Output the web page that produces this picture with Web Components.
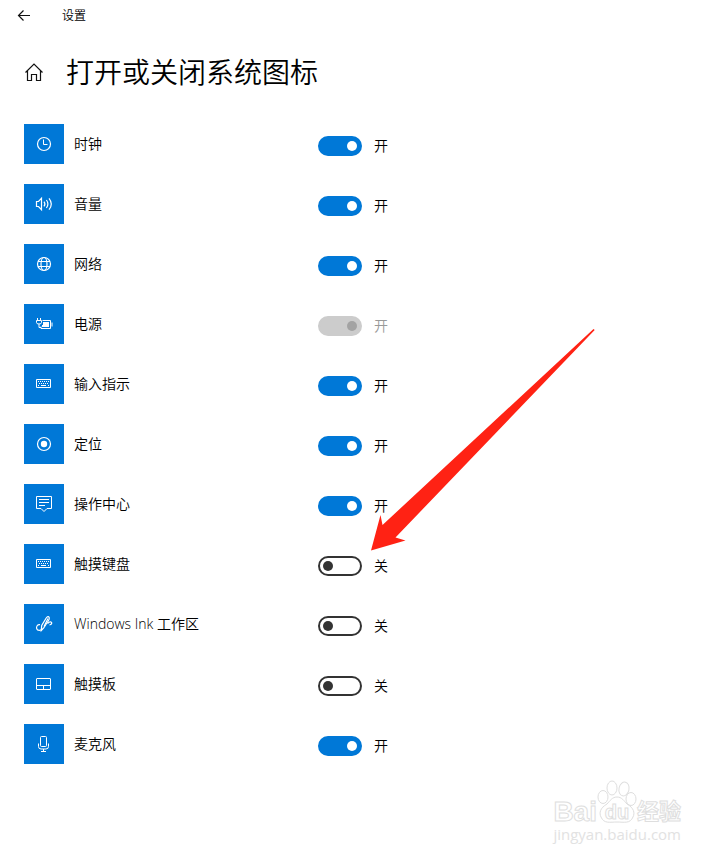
<!DOCTYPE html>
<html lang="zh-CN">
<head>
<meta charset="utf-8">
<meta name="viewport" content="width=device-width, initial-scale=1">
<title>设置</title>
<style>
    body {
        margin: 0;
        background: #fff;
        color: #000;
        font-family: "Open Sans", "Noto Sans CJK SC", sans-serif;
        font-size: 14px;
        font-weight: 350;
        line-height: 20px;
    }
</style>
</head>
<body>
<settings-page>
    <title-bar slot="top">设置</title-bar>
    <page-heading slot="top">打开或关闭系统图标</page-heading>
    <setting-row icon="clock" on>时钟</setting-row>
    <setting-row icon="volume" on>音量</setting-row>
    <setting-row icon="network" on>网络</setting-row>
    <setting-row icon="power" on disabled>电源</setting-row>
    <setting-row icon="keyboard" on>输入指示</setting-row>
    <setting-row icon="location" on>定位</setting-row>
    <setting-row icon="action" on>操作中心</setting-row>
    <setting-row icon="keyboard">触摸键盘</setting-row>
    <setting-row icon="ink">Windows Ink 工作区</setting-row>
    <setting-row icon="touchpad">触摸板</setting-row>
    <setting-row icon="mic" on>麦克风</setting-row>
    <pointer-arrow slot="overlay"></pointer-arrow>
    <site-mark slot="footer"></site-mark>
</settings-page>

<script>
// all icons are drawn on the 40x40 tile
const icons = {
    clock: `<circle cx="20" cy="20" r="6.5" stroke-width="1.2"/><path d="M19.5 15.5v5h4"/>`,
    volume: `<path d="M12.5 17.5h2l3-3.2v11.4l-3-3.2h-2z" stroke-width="1.2"/>
        <path d="M20 17.6q1.8 2.4 0 4.8M22.4 16q3 4 0 8M25 14.3q4.6 5.7 0 11.4" stroke-width="1.2"/>`,
    network: `<g stroke-width="1.2"><circle cx="20" cy="20" r="6.5"/><ellipse cx="20" cy="20" rx="3" ry="6.5"/></g>
        <path d="M14 17.5h12M14 22.5h12"/>`,
    power: `<path d="M13.5 14v3M16.5 14v3M15 20v3.5h2"/>
        <path d="M12.5 16.5h5v2q0 1.5-2.5 1.5t-2.5-1.5z"/>
        <path d="M18.5 16.5h8v8h-9.5v-2M28 18.5v4"/>
        <path d="M19 18h6v5h-7v-2h1z" fill="#fff" stroke="none"/>`,
    keyboard: `<path d="M12.5 15.5h14v8h-14z"/>
        <path d="M14 17.5h11" stroke-dasharray="1 1"/>
        <path d="M15 19.5h10" stroke-dasharray="1 1"/>
        <path d="M14 21.5h1M17 21.5h5M24 21.5h1"/>`,
    location: `<circle cx="20" cy="20" r="6.5" stroke-width="1.2"/><circle cx="20" cy="20" r="3.2" fill="#fff" stroke="none"/>`,
    action: `<path d="M12.5 12.5h15v12h-4.5l-3 3-3-3h-4.5z"/><path d="M15 15.5h10M15 18.5h10M15 21.5h6"/>`,
    ink: `<g stroke-width="1.2"><path d="M16 20.7c-2.5-.5-4 2-3.3 4 .8 2.3 4.3 2.3 5.3 0"/>
        <path d="M17.3 26.5l.4-5 4.5-7.5q2-2.5 3-.5 .5 1.5-1 3.5l-4.5 7z"/>
        <path d="M20 22.5l4-8M23.5 19.5l1.5-1.3q2-1 2.7.5 .3 1.8-2.2 2.3"/></g>`,
    touchpad: `<rect x="12.5" y="14.5" width="14" height="11" rx=".5"/><path d="M12.5 21.5h14M19.5 21.5v4"/>`,
    mic: `<rect x="16.5" y="12.5" width="6" height="10" rx="1"/>
        <path d="M14.5 19.5v3q0 2.5 2.5 2.5h5q2.5 0 2.5-2.5v-3M19.5 25v2.5M17 27.5h5"/>`
};

class SettingsPage extends HTMLElement {
    constructor() {
        super();
        this.attachShadow({mode: 'open'}).innerHTML = `
        <style>
            :host {
                display: block;
                position: relative;
            }
            main {
                display: grid;
                gap: 20px;
                padding: 12px 24px 0;
            }
        </style>
        <slot name="top"></slot>
        <main><slot></slot></main>
        <slot name="footer"></slot>
        <slot name="overlay"></slot>`;
    }
}

class TitleBar extends HTMLElement {
    constructor() {
        super();
        this.attachShadow({mode: 'open'}).innerHTML = `
        <style>
            :host {
                display: flex;
                align-items: center;
                gap: 14px;
                height: 32px;
                font-size: 12px;
            }
            button {
                width: 48px;
                height: 32px;
                padding: 0;
                border: 0;
                background: none;
            }
            svg { display: block; margin: auto; }
        </style>
        <button type="button" aria-label="返回">
            <svg width="16" height="16" fill="none" stroke="#111" stroke-width="1.2"><path d="M14 7.5H2.5M7.5 2.5l-5 5 5 5"/></svg>
        </button>
        <slot></slot>`;
    }
}

class PageHeading extends HTMLElement {
    constructor() {
        super();
        this.attachShadow({mode: 'open'}).innerHTML = `
        <style>
            :host {
                display: flex;
                align-items: center;
                gap: 22px;
                padding: 20px 24px;
            }
            a { color: inherit; }
            svg { display: block; }
            h1 {
                margin: 0;
                font-size: 28px;
                line-height: 40px;
                font-weight: inherit;
            }
        </style>
        <a href="#" aria-label="主页">
            <svg width="20" height="20" fill="none" stroke="#111" stroke-width="1.2"><path d="M1.5 10.5L10 2l8.5 8.5M3.5 9v9.5h4v-6h5v6h4V9"/></svg>
        </a>
        <h1><slot></slot></h1>`;
    }
}

class SettingRow extends HTMLElement {
    constructor() {
        super();
        this.attachShadow({mode: 'open'});
    }

    connectedCallback() {
        const on = this.hasAttribute('on');
        const disabled = this.hasAttribute('disabled');

        this.shadowRoot.innerHTML = `
        <style>
            :host {
                display: grid;
                grid-template-columns: 40px 234px 1fr;
                column-gap: 10px;
                align-items: center;
            }
            .tile {
                width: 40px;
                height: 40px;
                background: #0078d7;
                fill: none;
                stroke: #fff;
            }
            .switch {
                display: flex;
                align-items: center;
                gap: 12px;
                padding-top: 4px;
            }
            input {
                appearance: none;
                display: flex;
                align-items: center;
                box-sizing: border-box;
                width: 44px;
                height: 20px;
                margin: 0;
                padding: 0 3px;
                border: 2px solid #333;
                border-radius: 10px;
            }
            input::before {
                content: "";
                width: 10px;
                height: 10px;
                border-radius: 50%;
                background: #333;
            }
            input:checked {
                justify-content: flex-end;
                border-color: #0078d7;
                background: #0078d7;
            }
            input:checked::before { background: #fff; }
            input:disabled { border-color: #ccc; background: #ccc; }
            input:disabled::before { background: #a3a3a3; }
            input:disabled + span { color: #999; }
        </style>
        <svg class="tile" viewBox="0 0 40 40" aria-hidden="true">${icons[this.getAttribute('icon')]}</svg>
        <label for="toggle"><slot></slot></label>
        <div class="switch">
            <input id="toggle" type="checkbox" role="switch" ${on ? 'checked' : ''} ${disabled ? 'disabled' : ''}>
            <span>${on ? '开' : '关'}</span>
        </div>`;

        const input = this.shadowRoot.querySelector('input');
        const state = this.shadowRoot.querySelector('span');
        input.addEventListener('change', () => {
            state.textContent = input.checked ? '开' : '关';
        });
    }
}

// red arrow lying over the list, pointing at the touch keyboard switch
class PointerArrow extends HTMLElement {
    constructor() {
        super();
        this.attachShadow({mode: 'open'}).innerHTML = `
        <style>
            :host {
                position: absolute;
                left: 370px;
                top: 328px;
                pointer-events: none;
            }
            svg { display: block; }
        </style>
        <svg width="226" height="224" fill="#ff2214"><path d="M1 222.5l9.5-35.5 2 10L223.5 1l1.2 1L25.500 209.5l10 3z"/></svg>`;
    }
}

class SiteMark extends HTMLElement {
    constructor() {
        super();
        this.attachShadow({mode: 'open'}).innerHTML = `
        <style>
            :host {
                display: grid;
                justify-content: end;
                padding: 16px 40px 16px 0;
                color: #fff;
                font-family: "Liberation Sans", "Noto Sans CJK SC", sans-serif;
                -webkit-text-stroke: 1px #dedede;
            }
            .logo {
                display: flex;
                align-items: flex-end;
                font-size: 28px;
                line-height: 24px;
                font-weight: 700;
            }
            .paw {
                display: grid;
                place-items: end center;
                font-size: 20px;
            }
            .paw > * { grid-area: 1 / 1; }
            svg { fill: #fff; stroke: #dedede; }
            .cn { font-size: 22px; }
            .url {
                color: #e2e2e2;
                font-family: "Open Sans", sans-serif;
                font-size: 15px;
                font-weight: 400;
                line-height: 20px;
                -webkit-text-stroke: 0;
            }
        </style>
        <div class="logo">
            <span>Bai</span>
            <span class="paw">
                <svg width="40" height="44">
                    <path d="M20 17c-5 0-7 4-10 7-7 4-8 9-6 13 3 7 9 5 16 5s13 2 16-5c2-4 1-9-6-13-3-3-5-7-10-7z"/>
                    <ellipse cx="6" cy="17" rx="5" ry="6.5"/>
                    <ellipse cx="15" cy="8" rx="5" ry="7"/>
                    <ellipse cx="27" cy="9" rx="5" ry="7" transform="rotate(12 27 9)"/>
                    <ellipse cx="34" cy="19" rx="5" ry="6.5"/>
                </svg>
                <span>du</span>
            </span>
            <span class="cn">经验</span>
        </div>
        <span class="url">jingyan.baidu.com</span>`;
    }
}

customElements.define('settings-page', SettingsPage);
customElements.define('title-bar', TitleBar);
customElements.define('page-heading', PageHeading);
customElements.define('setting-row', SettingRow);
customElements.define('pointer-arrow', PointerArrow);
customElements.define('site-mark', SiteMark);
</script>
</body>
</html>
